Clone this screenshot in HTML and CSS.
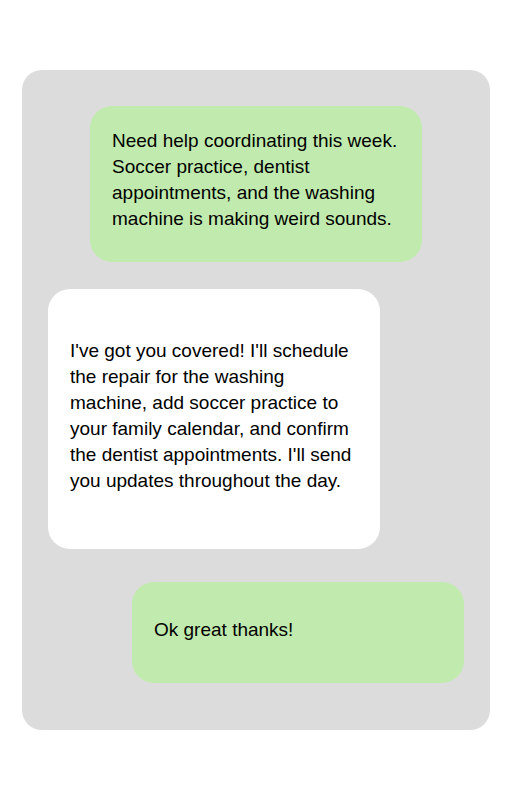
FILE: index.html
```html
<!DOCTYPE html>
<html lang="en">
<head>
<meta charset="utf-8">
<title>Chat</title>
<link rel="stylesheet" href="styles.css">
</head>
<body>
<main class="chat">
  <div class="bubble user first">Need help coordinating this week. Soccer practice, dentist appointments, and the washing machine is making weird sounds.</div>
  <div class="bubble bot">I've got you covered! I'll schedule the repair for the washing machine, add soccer practice to your family calendar, and confirm the dentist appointments. I'll send you updates throughout the day.</div>
  <div class="bubble user last">Ok great thanks!</div>
</main>
</body>
</html>
```

FILE: styles.css
```css
html, body {
  margin: 0;
  padding: 0;
  background: #ffffff;
}

body {
  font-family: "Liberation Sans", Arial, sans-serif;
  color: #000000;
}

.chat {
  margin: 70px 22px;
  padding: 36px 26px 47px;
  background: #dcdcdc;
  border-radius: 20px;
  display: flex;
  flex-direction: column;
}

.bubble {
  width: 332px;
  box-sizing: border-box;
  padding: 0 22px;
  border-radius: 22px;
  font-size: 19px;
  line-height: 26px;
}

.user {
  background: #c1ebae;
}

.first {
  align-self: center;
  padding-top: 22px;
  padding-bottom: 30px;
}

.bot {
  align-self: flex-start;
  background: #ffffff;
  margin-top: 27px;
  padding-top: 49px;
  padding-bottom: 55px;
}

.last {
  align-self: flex-end;
  margin-top: 33px;
  padding-top: 35px;
  padding-bottom: 40px;
}
```
